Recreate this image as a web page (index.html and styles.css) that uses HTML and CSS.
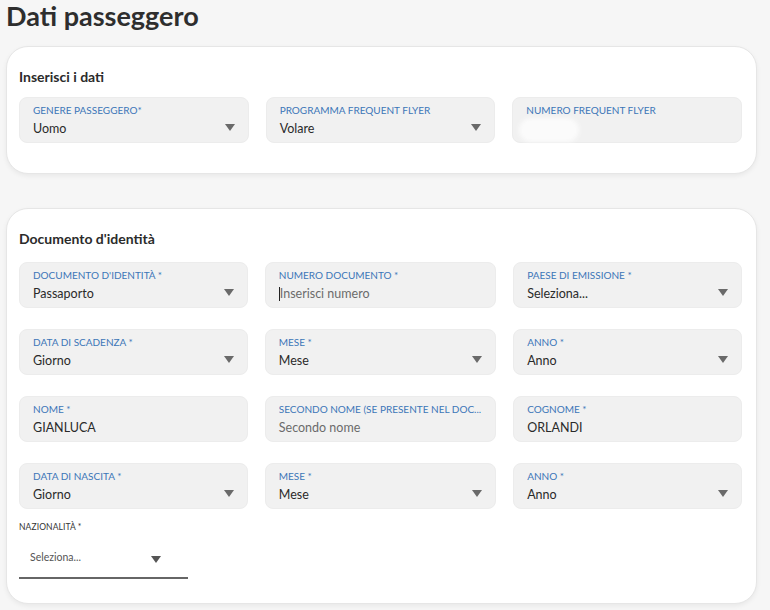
FILE: index.html
```html
<!DOCTYPE html>
<html lang="it">
<head>
<meta charset="utf-8">
<link rel="stylesheet" href="styles.css">
</head>
<body>
<h1 class="title">Dati passeggero</h1>

<section class="card card-top">
  <h2 class="card-title">Inserisci i dati</h2>
  <div class="grid">
    <div class="field select"><span class="label">GENERE PASSEGGERO*</span><span class="value">Uomo</span><span class="arrow"></span></div>
    <div class="field select"><span class="label">PROGRAMMA FREQUENT FLYER</span><span class="value">Volare</span><span class="arrow"></span></div>
    <div class="field"><span class="label">NUMERO FREQUENT FLYER</span><span class="value"><span class="blur"></span></span></div>
  </div>
</section>

<section class="card card-doc">
  <h2 class="card-title">Documento d'identità</h2>
  <div class="grid">
    <div class="field select"><span class="label">DOCUMENTO D'IDENTITÀ *</span><span class="value">Passaporto</span><span class="arrow"></span></div>
    <div class="field"><span class="label">NUMERO DOCUMENTO *</span><span class="value placeholder"><span class="caret"></span>Inserisci numero</span></div>
    <div class="field select"><span class="label">PAESE DI EMISSIONE *</span><span class="value">Seleziona...</span><span class="arrow"></span></div>

    <div class="field select"><span class="label">DATA DI SCADENZA *</span><span class="value">Giorno</span><span class="arrow"></span></div>
    <div class="field select"><span class="label">MESE *</span><span class="value">Mese</span><span class="arrow"></span></div>
    <div class="field select"><span class="label">ANNO *</span><span class="value">Anno</span><span class="arrow"></span></div>

    <div class="field"><span class="label">NOME *</span><span class="value">GIANLUCA</span></div>
    <div class="field"><span class="label">SECONDO NOME (SE PRESENTE NEL DOC...</span><span class="value placeholder">Secondo nome</span></div>
    <div class="field"><span class="label">COGNOME *</span><span class="value">ORLANDI</span></div>

    <div class="field select"><span class="label">DATA DI NASCITA *</span><span class="value">Giorno</span><span class="arrow"></span></div>
    <div class="field select"><span class="label">MESE *</span><span class="value">Mese</span><span class="arrow"></span></div>
    <div class="field select"><span class="label">ANNO *</span><span class="value">Anno</span><span class="arrow"></span></div>
  </div>
  <div class="nation">
    <div class="nation-label">NAZIONALITÀ *</div>
    <div class="nation-select"><span>Seleziona...</span><span class="arrow dark"></span></div>
  </div>
</section>
</body>
</html>
```

FILE: styles.css
```css
* { box-sizing: border-box; }
html, body { margin: 0; padding: 0; }
body {
  background: #f6f6f6;
  font-family: Lato, "Open Sans", sans-serif;
  color: #333;
  width: 770px;
  height: 610px;
  overflow: hidden;
}
.title {
  margin: 0;
  padding: 0 0 0 6px;
  font-size: 27px;
  line-height: 32px;
  font-weight: 700;
  color: #2e2e2e;
}
.card {
  margin: 0 13px 0 6px;
  background: #fff;
  border: 1px solid #e6e6e6;
  border-radius: 22px;
  box-shadow: 0 2px 5px rgba(0,0,0,0.06);
  padding: 21px 14px 0 12px;
}
.card-top { margin-top: 14px; height: 128px; }
.card-doc { margin-top: 34px; height: 396px; }
.card-title {
  margin: 0 0 11px;
  font-size: 14px;
  line-height: 18px;
  font-weight: 700;
  color: #2b2b2b;
}
.card-doc .card-title { margin-bottom: 14px; }
.grid {
  display: grid;
  grid-template-columns: repeat(3, 1fr);
  column-gap: 17px;
  row-gap: 21px;
}
.field {
  position: relative;
  height: 46px;
  background: #f1f1f1;
  border: 1px solid #ececec;
  border-radius: 8px;
  padding: 6px 14px 0 13px;
  display: flex;
  flex-direction: column;
}
.label {
  font-size: 10px;
  line-height: 13px;
  color: #3c76b8;
  white-space: nowrap;
  overflow: hidden;
}
.value {
  margin-top: 4px;
  font-size: 12.5px;
  line-height: 16px;
  color: #2a2a2a;
  display: flex;
  align-items: center;
}
.placeholder { color: #6b6b6b; }
.caret {
  display: inline-block;
  width: 1px;
  height: 14px;
  background: #222;
}
.blur {
  display: inline-block;
  width: 54px;
  height: 18px;
  margin-left: -4px;
  background: #fbfbfb;
  border-radius: 9px;
  box-shadow: 0 0 4px 3px #fbfbfb;
}
.arrow {
  position: absolute;
  right: 13px;
  top: 26px;
  width: 0;
  height: 0;
  border-left: 5px solid transparent;
  border-right: 5px solid transparent;
  border-top: 7px solid #6a6a6a;
}
.nation { margin-top: 12px; }
.nation-label {
  font-size: 8.5px;
  line-height: 12px;
  color: #333;
  letter-spacing: 0.1px;
}
.nation-select {
  position: relative;
  width: 169px;
  height: 46px;
  border-bottom: 2px solid #666;
  padding: 18px 0 0 11px;
  font-size: 10.5px;
  color: #555;
}
.nation-select .arrow { right: 27px; top: 23px; border-top-color: #555; }
```
